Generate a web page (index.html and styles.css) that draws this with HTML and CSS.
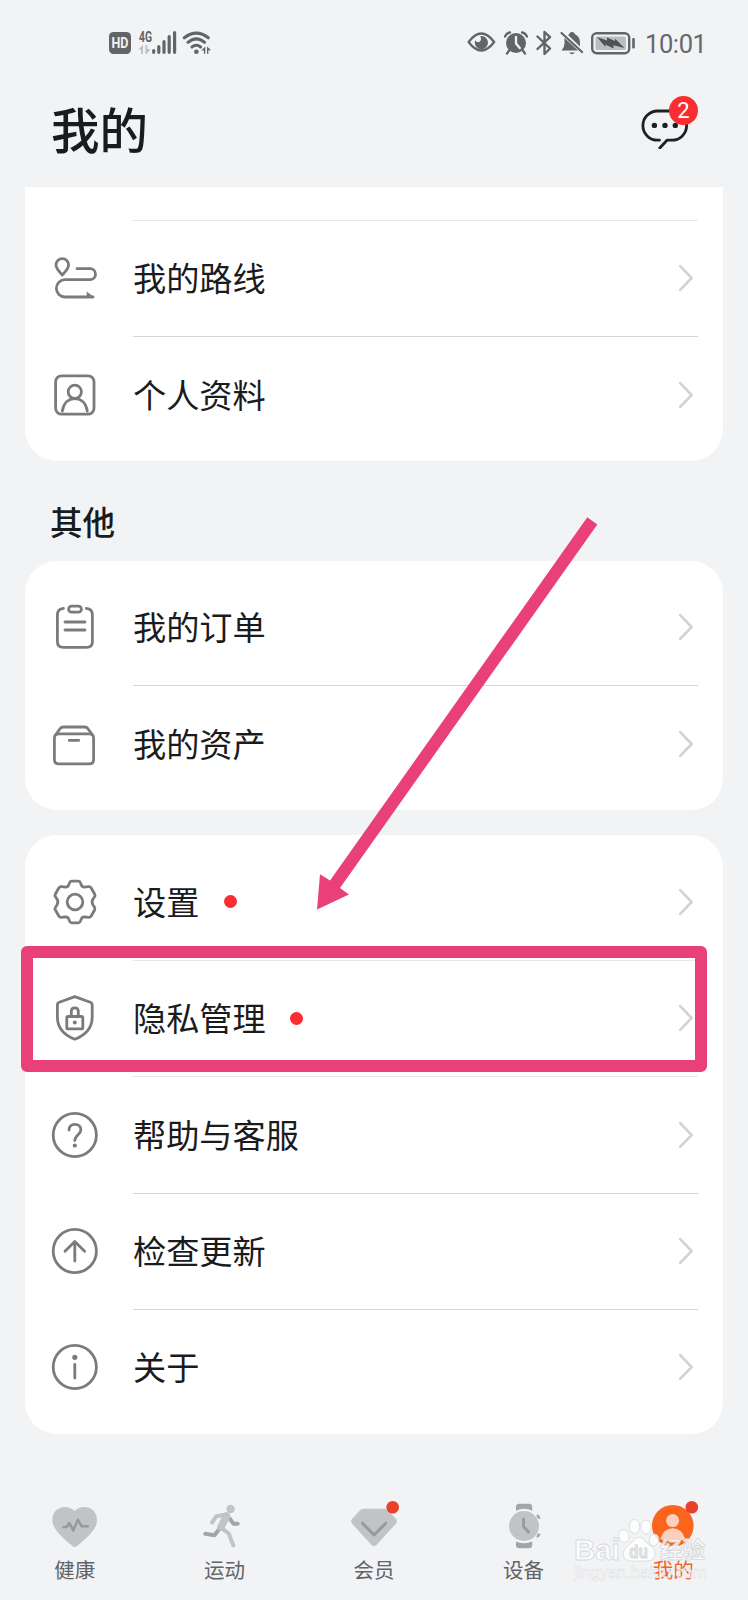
FILE: index.html
```html
<!DOCTYPE html>
<html lang="zh-CN">
<head>
  <meta charset="UTF-8">
  <meta name="viewport" content="width=device-width, initial-scale=1.0">
  <title>我的</title>
  <link rel="stylesheet" href="styles.css">
</head>
<body>
  <!-- shared chevron -->
  <svg class="symbols" width="0" height="0">
    <symbol id="chevron" viewBox="0 0 16 28">
      <path d="M2.2 2.2L13.6 14L2.2 25.8" fill="none" stroke="#d2d2d2" stroke-width="2.6" stroke-linecap="round" stroke-linejoin="round"/>
    </symbol>
  </svg>

  <div class="status-bar">
    <svg class="status-left" width="104" height="28" viewBox="0 0 104 28">
      <rect x="0" y="3" width="22" height="22" rx="4.5" fill="#636466"/>
      <text class="hd" x="11" y="18.8" text-anchor="middle" textLength="17" lengthAdjust="spacingAndGlyphs">HD</text>
      <text class="net" x="30" y="12.5" textLength="13" lengthAdjust="spacingAndGlyphs">4G</text>
      <g fill="#bcbdbf">
        <path d="M34 16v9h-1.8v-4.5h-2.8zM36.5 16h1.7v4h3.2l-3.6 5h-1.3z"/>
      </g>
      <g stroke="#636466" stroke-width="3.2" stroke-linecap="round">
        <path d="M44.7 21.5v1.8M49.8 17.5v5.8M55 12.5v10.8M60.2 7.5v15.8M65.6 3.5v19.8"/>
      </g>
      <g fill="none" stroke="#636466" stroke-width="3" stroke-linecap="round">
        <path d="M75.3 8.8Q87.3 -.6 99.3 8.8M79 13.3Q87.3 6.5 95.6 13.3M83 18Q87.3 14.6 91.6 18"/>
      </g>
      <circle cx="87.4" cy="22.8" r="2.3" fill="#636466"/>
      <path d="M96.3 17.5v7.3h-1.4v-3.3h-2.7zM98 17.5l4.2 3.8H99.4v3.5H98z" fill="#636466"/>
    </svg>
    <div class="status-right">
      <svg width="29" height="28" viewBox="0 0 29 28">
        <path d="M1.6 13Q14.3 -4 27.2 13Q14.3 30 1.6 13z" fill="none" stroke="#636466" stroke-width="2.3" stroke-linejoin="round"/>
        <path d="M14.4 7a6.6 6.6 0 1 1-6.6 6.5l.3-2.2q2.2 3 4.8 1.2q2.2-2.400.2-5.300z" fill="#636466"/>
      </svg>
      <svg width="26" height="28" viewBox="0 0 26 28">
        <circle cx="13" cy="14" r="10" fill="#636466"/>
        <path d="M2 7.600Q3.500 4 7 3.500M24 7.600Q22.500 4 19 3.500M6.500 21L4 24.500M19.500 21L22 24.500" fill="none" stroke="#636466" stroke-width="2.300" stroke-linecap="round"/>
        <path d="M13 8v6.500l3.800 4.500" fill="none" stroke="#f1f3f5" stroke-width="2.300" stroke-linecap="round"/>
      </svg>
      <svg width="16" height="28" viewBox="0 0 16 28">
        <path d="M1.500 7.500L14 19.500L8.500 25V3L14 8.200L1.500 20" fill="none" stroke="#636466" stroke-width="2.400" stroke-linejoin="round" stroke-linecap="round"/>
      </svg>
      <svg width="24" height="28" viewBox="0 0 24 28">
        <path d="M8 6q2-1.200 2-2.400q2-1 4 0q0 1.400 2.500 2.600q3.500 2.200 3.500 7.800v3.500zM4.500 9L18 21.500H1.500q3-3.500 3-7zM9 23.500h6q-3 3.500-6 0z" fill="#636466"/>
        <path d="M1.500 4L22 23" stroke="#636466" stroke-width="2.200" stroke-linecap="round"/>
      </svg>
      <svg width="46" height="28" viewBox="0 0 46 28">
        <rect x="1.200" y="4.200" width="37" height="20" rx="4.500" fill="none" stroke="#636466" stroke-width="2.400"/>
        <rect x="4.500" y="7.400" width="30.400" height="13.600" rx="1.500" fill="#bcbdbf"/>
        <path d="M6 8L16 11.500V8.500L24 12V9.500L33.500 19L22.500 16.200V19.500L14.500 15.500V18z" fill="#505153"/>
        <rect x="41.200" y="9" width="2.600" height="10.500" rx="1" fill="#636466"/>
      </svg>
      <span class="time">10:01</span>
    </div>
  </div>

  <header class="header">
    <h1>我的</h1>
    <div class="messages">
      <svg width="48" height="42" viewBox="0 0 48 42">
        <path d="M18.500 33.200H16.500A14.600 14.600 0 0 1 16.500 4H31A14.600 14.600 0 0 1 31 33.200H26L18.800 41" fill="none" stroke="#1f2022" stroke-width="2.800" stroke-linecap="round" stroke-linejoin="round" />
        <g fill="#1f2022"><circle cx="13.400" cy="18.400" r="2.700"/><circle cx="24" cy="18.400" r="2.700"/><circle cx="34.300" cy="18.400" r="2.700"/></g>
      </svg>
      <span class="badge">2</span>
    </div>
  </header>

  <main>
    <section class="card card-cut">
      <div class="row faint">
        <svg class="icon" viewBox="0 0 48 48">
          <path d="M11.300 21C8 17.500 5 14.500 5 11A6.300 6.300 0 0 1 17.600 11C17.600 14.500 14.600 17.500 11.300 21z"/>
          <path d="M26 14.700H39A5.500 5.500 0 0 1 39 25.700H14A8.650 8.650 0 0 0 14 43H42"/>
          <path class="solid" d="M35.700 37.500L43.500 43.500H35.700z"/>
        </svg>
        <span class="label">我的路线</span>
        <svg class="chevron"><use href="#chevron"/></svg>
      </div>
      <div class="row">
        <svg class="icon" viewBox="0 0 48 48">
          <rect x="4.600" y="4.800" width="38.400" height="38.400" rx="6"/>
          <circle cx="23.800" cy="20.800" r="6.600"/>
          <path d="M11.300 40C12.500 32.500 17 27.600 23.800 27.600S35.100 32.500 36.300 40"/>
        </svg>
        <span class="label">个人资料</span>
        <svg class="chevron"><use href="#chevron"/></svg>
      </div>
    </section>

    <h2>其他</h2>

    <section class="card">
      <div class="row">
        <svg class="icon" viewBox="0 0 48 48">
          <path d="M12.500 5.400Q6.400 6 6.400 12V38.500Q6.400 44.400 12.300 44.400H35.500Q41.400 44.400 41.400 38.500V12Q41.400 6 35.300 5.400"/>
          <rect x="17.600" y="3.200" width="12.800" height="6" rx="3"/>
          <path d="M14 19H34M14 27H34"/>
        </svg>
        <span class="label">我的订单</span>
        <svg class="chevron"><use href="#chevron"/></svg>
      </div>
      <div class="row">
        <svg class="icon" viewBox="0 0 48 48">
          <path d="M3.400 18Q3.400 13.800 7.600 13.800H38.400Q42.600 13.800 42.600 18V39.500Q42.600 43.900 38.300 43.900H7.700Q3.400 43.900 3.400 39.500z"/>
          <path d="M4.500 15L9 8.800Q10.200 7 12.300 7H33.700Q35.800 7 37 8.800L41.500 15M18.200 20.300H27.800"/>
        </svg>
        <span class="label">我的资产</span>
        <svg class="chevron"><use href="#chevron"/></svg>
      </div>
    </section>

    <section class="card">
      <div class="row">
        <svg class="icon" viewBox="-24 -24 48 48">
          <path d="M-3.500 -20.800H3.500Q5 -20.800 5.500 -19L6.300 -17Q7 -15 9.300 -14.900L13.500 -15.300Q15.300 -15.500 16.200 -14L19.600 -8Q20.500 -6.500 19.400 -5L18 -3Q16.200 0 18 3L19.400 5Q20.500 6.500 19.600 8L16.200 14Q15.300 15.500 13.500 15.300L9.300 14.900Q7 15 6.300 17L5.500 19Q5 20.800 3.500 20.800H-3.500Q-5 20.800 -5.500 19L-6.300 17Q-7 15 -9.300 14.900L-13.500 15.300Q-15.300 15.500 -16.200 14L-19.600 8Q-20.500 6.500 -19.400 5L-18 3Q-16.200 0 -18 -3L-19.400 -5Q-20.500 -6.500 -19.600 -8L-16.200 -14Q-15.300 -15.500 -13.500 -15.300L-9.300 -14.900Q-7 -15 -6.300 -17L-5.500 -19Q-5 -20.800 -3.500 -20.800z"/>
          <circle r="7.800"/>
        </svg>
        <span class="label">设置</span>
        <i class="dot"></i>
        <svg class="chevron"><use href="#chevron"/></svg>
      </div>
      <div class="row faint">
        <svg class="icon" viewBox="0 0 48 48">
          <path d="M23.800 2.600L39.300 8.300Q41.200 9 41.200 11V23C41.200 34.500 33.500 41.500 23.800 45.300C14.100 41.500 6.400 34.500 6.400 23V11Q6.400 9 8.300 8.300z"/>
          <rect x="15.800" y="22.500" width="16" height="12.400" rx="1.200"/>
          <path d="M20.300 22V17.200Q20.300 13.800 23.800 13.800T27.300 17.200V22"/>
          <circle class="solid" cx="23.800" cy="28.500" r="2"/>
        </svg>
        <span class="label">隐私管理</span>
        <i class="dot"></i>
        <svg class="chevron"><use href="#chevron"/></svg>
      </div>
      <div class="row faint">
        <svg class="icon" viewBox="0 0 48 48">
          <circle cx="23.800" cy="24" r="21.600"/>
          <path d="M18 19C18 15.500 20.500 13.300 23.900 13.300S29.900 15.700 29.900 18.800C29.900 23.500 23.800 24 23.800 29.600"/>
          <circle class="solid" cx="23.800" cy="34.600" r="2.100"/>
        </svg>
        <span class="label">帮助与客服</span>
        <svg class="chevron"><use href="#chevron"/></svg>
      </div>
      <div class="row">
        <svg class="icon" viewBox="0 0 48 48">
          <circle cx="23.800" cy="24" r="21.600"/>
          <path d="M14 24.300L23.800 14.600L33.600 24.300M23.800 15V34"/>
        </svg>
        <span class="label">检查更新</span>
        <svg class="chevron"><use href="#chevron"/></svg>
      </div>
      <div class="row">
        <svg class="icon" viewBox="0 0 48 48">
          <circle cx="23.800" cy="24" r="21.600"/>
          <circle class="solid" cx="23.800" cy="14.300" r="2.600"/>
          <path d="M23.800 21.500V35"/>
        </svg>
        <span class="label">关于</span>
        <svg class="chevron"><use href="#chevron"/></svg>
      </div>
    </section>
  </main>

  <nav class="tab-bar">
    <div class="tab">
      <svg viewBox="0 0 48 48">
        <path d="M23.700 8Q18.500 3.500 13 4Q1.500 5.500 1.300 17.500Q1.500 27.500 21.500 43Q23.700 45 25.900 43Q46 27.500 46 17.500Q45.500 5.500 34.500 4Q28.500 3.500 23.700 8z" fill="#c2c3c5"/>
        <path d="M12.500 24H15.700L18.300 20L22.300 27.300L27 16.800L30.700 23.300H36.700" fill="none" stroke="#98999b" stroke-width="2.600" stroke-linecap="round" stroke-linejoin="round"/>
      </svg>
      <span>健康</span>
    </div>
    <div class="tab">
      <svg viewBox="0 0 48 48" fill="none" stroke-linecap="round" stroke-linejoin="round">
        <path d="M18.500 27L14.500 32.300L5.300 30.700M29.600 15.500L33.600 20.700H37.700" stroke="#a4a5a7" stroke-width="4"/>
        <path d="M12 19.500L16.300 13.300L27 11.500M20.500 24.300L28.800 30.500L33.300 42.500" stroke="#c2c3c5" stroke-width="4"/>
        <path d="M26.500 13L21 24" stroke="#c2c3c5" stroke-width="7.500"/>
        <circle cx="30.600" cy="6" r="4.200" fill="#c2c3c5"/>
      </svg>
      <span>运动</span>
    </div>
    <div class="tab">
      <svg viewBox="0 0 48 48">
        <path d="M13.500 5.700H34.500Q36.500 5.700 38 7.300L46 16Q47.800 18.300 46 20.500L26.500 42Q24 44.300 21.500 42L2 20.500Q.2 18.300 2 16L10 7.300Q11.500 5.700 13.500 5.700z" fill="#c2c3c5"/>
        <path d="M12.500 20.200L24 32L35.800 20.200" fill="none" stroke="#98999b" stroke-width="3" stroke-linecap="round" stroke-linejoin="round"/>
        <circle cx="42.700" cy="4.300" r="6.300" fill="#e8412a"/>
      </svg>
      <span>会员</span>
    </div>
    <div class="tab">
      <svg viewBox="0 0 48 48">
        <path d="M16 7.800V4Q16 .8 19.200 .8H29Q32.200 .8 32.200 4V7.800Q24 3.800 16 7.800zM16 38.400V42Q16 45.200 19.200 45.200H29Q32.200 45.200 32.200 42V38.400Q24 42 16 38.400z" fill="#a4a5a7"/>
        <circle cx="24" cy="23" r="15" fill="#c2c3c5"/>
        <path d="M23.500 16V23.500L28.500 29" fill="none" stroke="#98999b" stroke-width="2.700" stroke-linecap="round" stroke-linejoin="round"/>
        <path d="M37.800 12.800L39 14.600M39 31.500L37.800 33.200" stroke="#a4a5a7" stroke-width="2.600" stroke-linecap="round"/>
      </svg>
      <span>设备</span>
    </div>
    <div class="tab active">
      <svg viewBox="0 0 48 48">
        <circle cx="23.800" cy="22.700" r="20.800" fill="#fa641c"/>
        <circle cx="23.600" cy="17.600" r="6.500" fill="#fcd0ba"/>
        <path d="M11.300 36Q14.500 25.300 23.700 25.300T36.200 36Q24 42 11.300 36z" fill="#fcd0ba"/>
        <circle cx="42.800" cy="4.300" r="6.300" fill="#e8412a"/>
      </svg>
      <span>我的</span>
    </div>
  </nav>

  <!-- highlight box and arrow over the list -->
  <div class="highlight"></div>
  <svg class="arrow" width="290" height="400" viewBox="0 0 290 400">
    <path d="M277.300 7.200L287.300 14.500L30 378L39 384.500L7 399.500L10 364.300L20 370.500z" fill="#ea4079"/>
  </svg>

  <div class="watermark">
    <svg width="138" height="70" viewBox="0 0 138 70">
      <g class="paw">
        <ellipse cx="52" cy="22" rx="5.200" ry="6.500" transform="rotate(-15 52 22)"/>
        <ellipse cx="62.500" cy="12.500" rx="5.200" ry="7"/>
        <ellipse cx="74" cy="13" rx="5.200" ry="7"/>
        <ellipse cx="82" cy="26" rx="4.800" ry="6" transform="rotate(15 82 26)"/>
        <path d="M67 23Q71 23 75 29Q84 35 83 40Q82 47 75 47H58Q51 46 51 39Q52 34 59 29Q63 23 67 23z"/>
      </g>
      <text class="wm-big" x="2" y="46" textLength="46" lengthAdjust="spacingAndGlyphs">Bai</text>
      <text class="wm-du" x="57" y="44" textLength="19" lengthAdjust="spacingAndGlyphs">du</text>
      <text class="wm-cn" x="88" y="44" textLength="45">经验</text>
      <text class="wm-url" x="2" y="64" textLength="133" lengthAdjust="spacingAndGlyphs">jingyan.baidu.com</text>
    </svg>
  </div>
</body>
</html>
```
FILE: styles.css
```css
* {
  margin: 0;
  padding: 0;
  box-sizing: border-box;
}

body {
  position: relative;
  width: 748px;
  height: 1600px;
  overflow: hidden;
  background-color: #f1f3f5;
  color: #1a1b1c;
  font-family: "Noto Sans CJK SC", sans-serif;
}

svg {
  display: block;
  flex-shrink: 0;
}

.symbols {
  position: absolute;
}

/* status bar */
.status-bar {
  display: flex;
  justify-content: space-between;
  height: 87px;
  padding: 29px 42px 0 109px;
}

.hd {
  font: bold 14px Roboto, sans-serif;
  fill: #f1f3f5;
}

.net {
  font: bold 14.5px Roboto, sans-serif;
  fill: #636466;
}

.status-right {
  display: flex;
  height: 28px;
}

.status-right svg:nth-child(1) {
  margin-right: 7px;
}

.status-right svg:nth-child(2) {
  margin-right: 7px;
}

.status-right svg:nth-child(3) {
  margin-right: 8px;
}

.status-right svg:nth-child(4) {
  margin-right: 7px;
}

.status-right svg:nth-child(5) {
  margin-right: 8px;
}

.time {
  width: 61px;
  font: 25.5px/31px Roboto, sans-serif;
  letter-spacing: -0.4px;
  color: #66676a;
}

/* header */
.header {
  display: flex;
  justify-content: space-between;
  height: 100px;
  padding: 5px 59px 0 51px;
}

h1 {
  font-size: 48.5px;
  line-height: 72px;
  font-weight: 500;
}

.messages {
  position: relative;
  height: 42px;
  margin-top: 15px;
}

.badge {
  position: absolute;
  left: 28px;
  top: -11px;
  width: 29px;
  height: 29px;
  border-radius: 50%;
  background-color: #fa2d30;
  color: #fff;
  font: 22px/30px Roboto, sans-serif;
  text-align: center;
}

/* list cards */
main {
  padding: 0 25px;
}

.card {
  padding: 8.5px 0;
  margin-bottom: 25px;
  border-radius: 32px;
  background-color: #fff;
}

.card-cut {
  height: 274px;
  padding-top: 33px;
  margin-bottom: 0;
  border-radius: 0 0 32px 32px;
}

.row {
  display: grid;
  grid-template-columns: 48px 34px auto auto 1fr;
  align-items: center;
  height: 116.35px;
  padding: 0 29px 0 26px;
  background: linear-gradient(#d4d5d6, #d4d5d6) no-repeat 108px 0 / 565px 1px;
}

.faint {
  background-image: linear-gradient(#e6e7e8, #e6e7e8);
}

.card:not(.card-cut) .row:first-child {
  background: none;
}

.icon {
  grid-column: 1;
  width: 48px;
  height: 48px;
  fill: none;
  stroke: #7b7b7b;
  stroke-width: 2.8;
  stroke-linecap: round;
  stroke-linejoin: round;
}

.icon .solid {
  fill: #7b7b7b;
  stroke: none;
}

.label {
  grid-column: 3;
  margin-top: -2px;
  font-size: 33.2px;
  line-height: 48px;
}

.dot {
  grid-column: 4;
  width: 13px;
  height: 13px;
  margin-left: 24.5px;
  border-radius: 50%;
  background-color: #fa2d30;
}

.chevron {
  grid-column: 5;
  justify-self: end;
  width: 16px;
  height: 28px;
}

h2 {
  height: 99.5px;
  padding: 36px 0 0 25px;
  font-size: 32.5px;
  line-height: 48px;
  font-weight: 500;
}

/* bottom tabs */
.tab-bar {
  display: grid;
  grid-template-columns: repeat(5, 1fr);
  margin-top: 69px;
}

.tab {
  display: flex;
  flex-direction: column;
  align-items: center;
  font-size: 20.5px;
  line-height: 30px;
  color: #626366;
}

.tab svg {
  width: 48px;
  height: 48px;
  margin-bottom: 3px;
  overflow: visible;
}

.active {
  color: #f4631f;
}

/* overlays */
.highlight {
  position: absolute;
  left: 21px;
  top: 946px;
  width: 686px;
  height: 126px;
  border: 12.5px solid #ea4079;
  border-radius: 6px;
}

.arrow {
  position: absolute;
  left: 310px;
  top: 510px;
}

.watermark {
  position: absolute;
  left: 572px;
  top: 1514px;
}

.watermark text,
.paw {
  fill: rgba(255, 255, 255, 0.8);
  stroke: #d6d7d9;
  stroke-width: 0.8px;
}

.wm-big {
  font: bold 29px "Liberation Sans", sans-serif;
}

.watermark .wm-du {
  font: bold 18px "Liberation Sans", sans-serif;
  fill: #e4e5e7;
}

.watermark .wm-cn {
  font: bold 22.5px "Noto Sans CJK SC", sans-serif;
}

.watermark .wm-url {
  font: 16px "Liberation Sans", sans-serif;
  stroke-width: 0.4px;
}
```
